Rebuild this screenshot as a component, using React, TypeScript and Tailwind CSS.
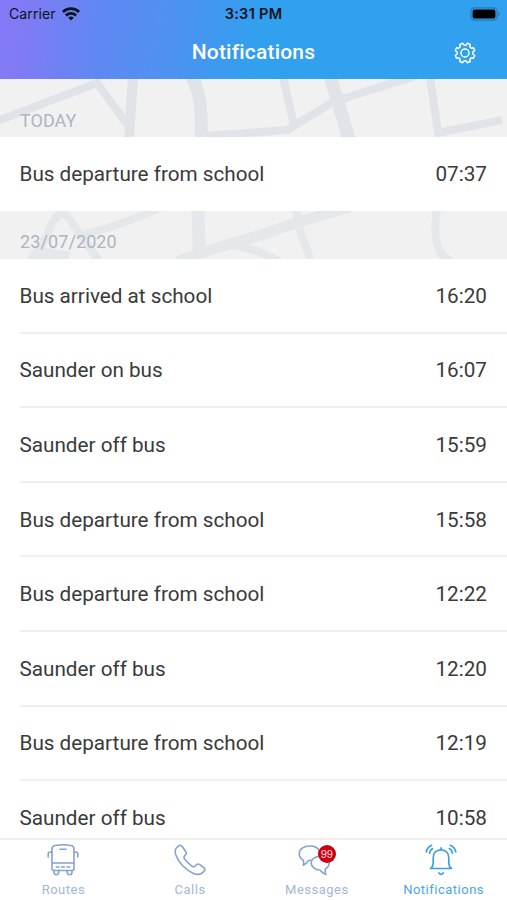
import type { ReactNode } from 'react';

interface Notification {
  text: string;
  time: string;
}

const today: Notification[] = [{ text: 'Bus departure from school', time: '07:37' }];

const earlier: Notification[] = [
  { text: 'Bus arrived at school', time: '16:20' },
  { text: 'Saunder on bus', time: '16:07' },
  { text: 'Saunder off bus', time: '15:59' },
  { text: 'Bus departure from school', time: '15:58' },
  { text: 'Bus departure from school', time: '12:22' },
  { text: 'Saunder off bus', time: '12:20' },
  { text: 'Bus departure from school', time: '12:19' },
  { text: 'Saunder off bus', time: '10:58' },
];

function WifiIcon() {
  return (
    <svg viewBox="0 0 18 14" className="w-[18px] h-[14px]" fill="none" stroke="#0c1420" strokeWidth="2.7">
      <path d="M.9 5a11.6 11.6 0 0 1 16.2 0" />
      <path d="M3.9 8.4a7.4 7.4 0 0 1 10.2 0" />
      <path d="M9 13.6 6.2 10.8a4 4 0 0 1 5.6 0Z" fill="#0c1420" stroke="none" />
    </svg>
  );
}

function BatteryIcon() {
  return (
    <svg viewBox="0 0 31 14" className="w-[31px] h-[14px]">
      <rect x=".8" y=".8" width="26.4" height="12.4" rx="4" fill="none" stroke="#2678b5" strokeWidth="1.2" />
      <rect x="2.6" y="2.4" width="22.8" height="9.2" rx="2.2" fill="#000" />
      <path d="M28.6 4.8a2.6 2.6 0 0 1 0 4.4Z" fill="#2678b5" />
    </svg>
  );
}

function GearIcon() {
  return (
    <svg viewBox="-11 -11 22 22" className="w-[22px] h-[22px]" fill="none" stroke="#fff" strokeWidth="1.5" strokeLinejoin="round">
      <path d="M7.8 1 9.7 2.3 8.5 5.2 6.3 4.8 4.8 6.3 5.2 8.5 2.3 9.7 1 7.8H-1L-2.3 9.7-5.2 8.5-4.8 6.3-6.3 4.8-8.5 5.2-9.7 2.3-7.8 1V-1L-9.7-2.3-8.5-5.2-6.3-4.8-4.8-6.3-5.2-8.5-2.3-9.7-1-7.8H1L2.3-9.7 5.2-8.5 4.8-6.3 6.3-4.8 8.5-5.2 9.7-2.3 7.8-1Z" />
      <circle r="4" />
    </svg>
  );
}

function BusIcon() {
  return (
    <svg viewBox="0 0 34 34" className="w-[34px] h-[34px]" fill="none" stroke="#84a3cf" strokeWidth="1.6" strokeLinecap="round" strokeLinejoin="round">
      <path d="M9 2.5Q17 1 25 2.5Q28 3 28 6V25.5Q28 27.5 26 27.5H8Q6 27.5 6 25.5V6Q6 3 9 2.5Z" />
      <path d="M6 20H28M14 6.3H20M10.3 24H13M15.5 24H18.5M21 24H23.7" />
      <path d="M6 9H4.2Q2.2 9 2.2 11V14M28 9H29.8Q31.8 9 31.8 11V14" />
      <path d="M8 27.5V29.3A2.4 2.4 0 0 0 12.8 29.3V27.5M21.2 27.5V29.3A2.4 2.4 0 0 0 26 29.3V27.5" />
    </svg>
  );
}

function PhoneIcon() {
  return (
    <svg viewBox="0 0 34 34" className="w-[34px] h-[34px]" fill="none" stroke="#84a3cf" strokeWidth="1.6" strokeLinejoin="round">
      <path d="M5.2 3.2 3.6 4.8C1.8 6.6 2 10 3.4 13.2C6 19.8 13.4 27.6 20.5 30.4C24.2 31.8 27.6 31.6 29.6 29.6L31.1 28.1C32.1 27.1 32.1 25.8 31.1 24.9L26.8 21.6C25.7 20.8 24.6 20.8 23.7 21.6L21.6 23.3C20.6 24 19.6 23.8 18.6 22.9C15.9 20.8 13.7 18.6 11.6 15.9C10.8 14.9 10.8 14 11.5 13.1L12.7 11.6C13.5 10.6 13.4 9.6 12.7 8.5L9.2 3.5C8.1 2 6.7 1.7 5.2 3.2Z" />
    </svg>
  );
}

function MessagesIcon() {
  return (
    <svg viewBox="0 0 34 34" className="w-[34px] h-[34px] overflow-visible" fill="none" stroke="#84a3cf" strokeWidth="1.6" strokeLinejoin="round">
      <path d="M19.5 8C18 4.6 14.5 3 9.8 3C3.6 3-.7 6.3-.7 10.7C-.7 13.4.8 15.8 3.3 17.2C3.8 19 3.8 20.6 3.3 22.2C5.6 21 7.2 19.4 8.2 17.7L11.5 17" />
      <path d="M18.5 13.6C14.2 13.9 11.2 16.4 11.2 20C11.2 23.9 15 26.9 20.2 27.2C21.6 29.2 23.2 30.5 25.8 31.6C25.1 29.8 25 28 25.3 26.2C27.8 24.6 29.2 22.4 29.2 19.8C29.2 18.8 29 17.8 28.6 17" />
    </svg>
  );
}

function BellIcon() {
  return (
    <svg viewBox="0 0 34 34" className="w-[34px] h-[34px]" fill="none" stroke="#3a9fe6" strokeWidth="1.7" strokeLinecap="round" strokeLinejoin="round">
      <path d="M17 6.8C12 6.8 9.2 10.3 9.2 15V20.5C9.2 22.5 8.4 24.1 6.6 25.5H27.4C25.6 24.1 24.8 22.5 24.8 20.5V15C24.8 10.3 22 6.8 17 6.8ZM17 6.5V4.9" />
      <path d="M14.8 30Q17 32.8 19.2 30" />
      <path d="M8.6 5.6Q6.2 7 5.6 10.2M25.4 5.6Q27.8 7 28.4 10.2M7.6 2.3Q3.4 4.2 2.2 8.8M26.4 2.3Q30.6 4.2 31.8 8.8" />
    </svg>
  );
}

// street map pieces behind the section headings
function TodayMap() {
  return (
    <svg viewBox="0 0 507 58" className="absolute inset-0 w-full h-full" fill="none" stroke="#e0e3e7" strokeWidth="8">
      <path d="M-5 43 97 4 129 48" />
      <path d="M133 -2 129 60" strokeWidth="10" />
      <path d="M192 -3C201 16 202 34 201 60" strokeWidth="13" />
      <path d="M204 57 287 51 333 23 418 -4" />
      <path d="M283 -2 295 50" />
      <path d="M330 -3 349 60" strokeWidth="13" />
      <path d="M430 -2 438 54 502 41" />
    </svg>
  );
}

function EarlierMap() {
  return (
    <svg viewBox="0 0 507 48" className="absolute inset-0 w-full h-full" fill="none" stroke="#e5e8ea" strokeWidth="8">
      <path d="M34 50 54 9Q62 -3 70 9L99 50" />
      <path d="M26 48 36 35 70 41 69 48Z" fill="#e5e8ea" stroke="none" />
      <path d="M80 26 90 22Q130 11 162 -4" />
      <path d="M198 -2 199 42" strokeWidth="13" />
      <path d="M178 51C205 38 245 30 270 21S325 3 350 -4" strokeWidth="11" />
      <path d="M226 34Q255 36 280 51M296 -2 300 20 311 50" />
      <path d="M437 -2Q430 42 451 50" />
    </svg>
  );
}

function Row({ item, last }: { item: Notification; last?: boolean }) {
  return (
    <li className={`ml-5 pr-5 flex items-center justify-between text-[20.7px] text-[#3a3a3b] ${last ? 'h-[74px] pt-px' : 'h-[74.6px] pt-[2px] border-b-2 border-[#efeff0]'}`}>
      <span className="-ml-[0.5px]">{item.text}</span>
      <span>{item.time}</span>
    </li>
  );
}

interface TabProps {
  label: string;
  icon: ReactNode;
  active?: boolean;
  badge?: string;
}

function Tab({ label, icon, active, badge }: TabProps) {
  return (
    <button className={`w-[126.75px] flex flex-col items-center pt-[3px] text-[13px] tracking-[0.5px] ${active ? 'text-[#4ba6e8]' : 'text-[#a3b7d6]'}`}>
      <span className={active ? 'relative mr-[6px]' : 'relative'}>
        {icon}
        {badge && (
          <span className="absolute left-[18px] top-[2px] size-[18px] rounded-full bg-[#cb0010] text-white/85 font-['Inter',sans-serif] text-[10px] leading-[18px] text-center tracking-normal">
            {badge}
          </span>
        )}
      </span>
      <span className="leading-[16px] mt-[5px]">{label}</span>
    </button>
  );
}

export default function App() {
  return (
    <div className="w-full h-[900px] flex flex-col overflow-hidden bg-white font-['Roboto',sans-serif]">
      <header className="h-[79px] shrink-0 bg-[linear-gradient(98deg,#8579f6_0%,#7f7bf5_6%,#6287f2_19%,#4b93f0_36%,#30a0ef_51%)]">
        <div className="h-[27px] grid grid-cols-[1fr_auto_1fr] items-center pl-[9px] pr-[6px] font-['Inter',sans-serif] text-[14px] text-[#0c1420]">
          <div className="flex items-center gap-[6px]">
            <span className="tracking-[0.1px]">Carrier</span>
            <WifiIcon />
          </div>
          <span className="text-[14.5px] font-semibold tracking-[0.3px] -ml-[3px]">3:31 PM</span>
          <div className="flex justify-end">
            <BatteryIcon />
          </div>
        </div>
        <div className="h-[51px] grid grid-cols-[1fr_auto_1fr] items-center pr-[31px] pl-[31px]">
          <span />
          <h1 className="text-[21px] font-medium text-white tracking-[0.2px]">Notifications</h1>
          <div className="flex justify-end">
            <GearIcon />
          </div>
        </div>
      </header>

      <main className="flex-1 min-h-0 overflow-hidden flex flex-col">
        <section className="shrink-0">
          <div className="relative h-[58px] bg-[#f1f1f2] pl-5 pt-[30px]">
            <TodayMap />
            <h2 className="relative text-[18px] leading-[24px] text-[#acb5c3]">TODAY</h2>
          </div>
          <ul>
            {today.map((item) => (
              <Row key={item.time} item={item} last />
            ))}
          </ul>
        </section>
        <section className="shrink-0">
          <div className="relative h-[48px] bg-[#f1f1f2] pl-5 pt-[19px]">
            <EarlierMap />
            <h2 className="relative text-[18px] leading-[24px] tracking-[0.1px] text-[#acb5c3]">23/07/2020</h2>
          </div>
          <ul>
            {earlier.map((item, i) => (
              <Row key={item.time} item={item} last={i === earlier.length - 1} />
            ))}
          </ul>
        </section>
      </main>

      <nav className="h-[62px] shrink-0 flex bg-white border-t-2 border-[#efeff0]">
        <Tab label="Routes" icon={<BusIcon />} />
        <Tab label="Calls" icon={<PhoneIcon />} />
        <Tab label="Messages" icon={<MessagesIcon />} badge="99" />
        <Tab label="Notifications" icon={<BellIcon />} active />
      </nav>
    </div>
  );
}
